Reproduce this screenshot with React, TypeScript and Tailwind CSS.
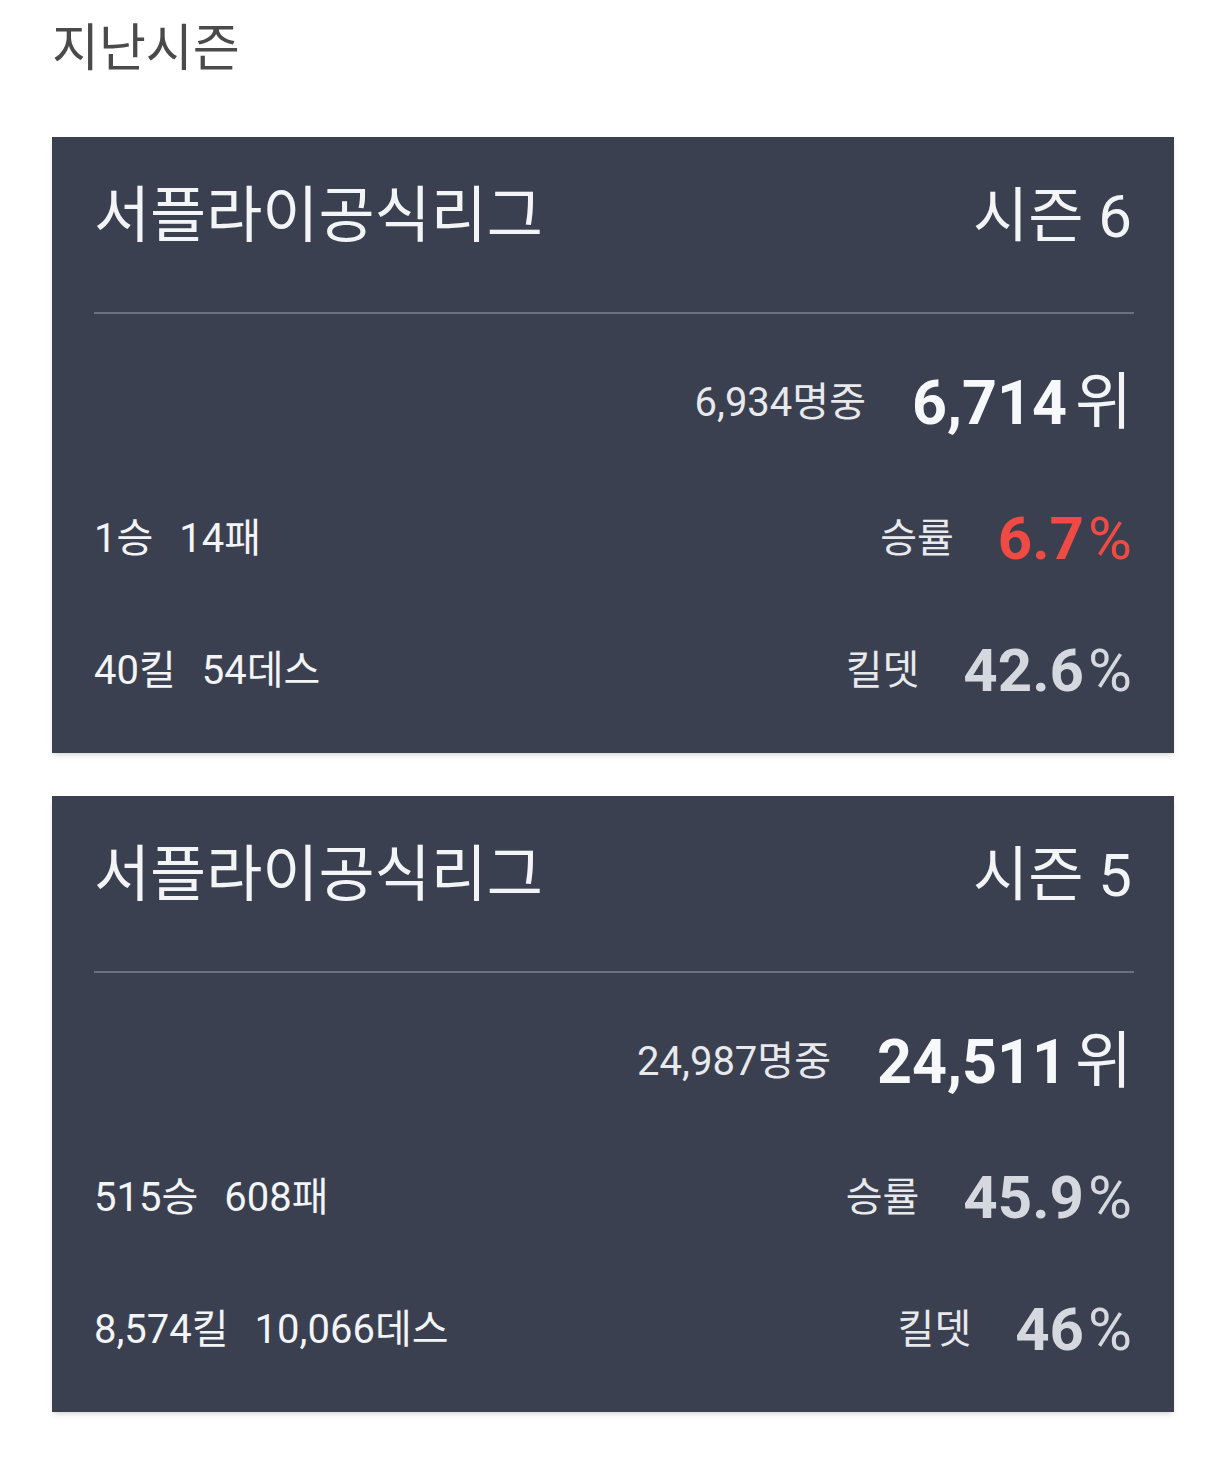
const seasons = [
  {
    league: '서플라이공식리그',
    season: '시즌 6',
    total: '6,934',
    rank: '6,714',
    wins: '1',
    losses: '14',
    winRate: '6.7',
    low: true,
    kills: '40',
    deaths: '54',
    kd: '42.6',
  },
  {
    league: '서플라이공식리그',
    season: '시즌 5',
    total: '24,987',
    rank: '24,511',
    wins: '515',
    losses: '608',
    winRate: '45.9',
    low: false,
    kills: '8,574',
    deaths: '10,066',
    kd: '46',
  },
];

const font = "font-['Roboto','Noto_Sans_CJK_KR',sans-serif]";

const SeasonCard = ({ s }: { s: (typeof seasons)[number] }) => (
  <div className="bg-[#3a4050] shadow-md px-[42px] text-[#f3f4f6]">
    {/* Header */}
    <div className="h-[175px] flex items-center justify-between pb-4">
      <span className="text-[61px] leading-none">{s.league}</span>
      <span className="text-[60px] leading-none">{s.season}</span>
    </div>
    <div className="border-t-2 border-[#6b7180] -mr-[2px]" />

    <div className="pt-[22px] pb-[15px]">
      {/* Rank */}
      <div className="h-[134px] flex items-center justify-end">
        <span className="text-[40px] leading-none text-[#e8e9ec] mr-[46px]">{s.total}명중</span>
        <span className="text-[61px] leading-none font-bold text-[#f7f8fa]">{s.rank}</span>
        <span className="text-[62px] leading-none ml-2">위</span>
      </div>

      {/* Win / Loss */}
      <div className="h-[134px] flex items-center justify-between pt-1">
        <div className="flex gap-[26px] text-[40px] leading-none">
          <span>{s.wins}승</span>
          <span>{s.losses}패</span>
        </div>
        <div className="flex items-center">
          <span className="text-[40px] leading-none text-[#e8e9ec] mr-[44px]">승률</span>
          <span className={`text-[60px] leading-none font-bold ${s.low ? 'text-[#ef4b44]' : 'text-[#d5d8de]'}`}>
            {s.winRate}
          </span>
          <span className={`text-[60px] leading-none ml-1 ${s.low ? 'text-[#ef4b44]' : 'text-[#d5d8de]'}`}>%</span>
        </div>
      </div>

      {/* Kill / Death */}
      <div className="h-[134px] flex items-center justify-between">
        <div className="flex gap-[26px] text-[40px] leading-none">
          <span>{s.kills}킬</span>
          <span>{s.deaths}데스</span>
        </div>
        <div className="flex items-center">
          <span className="text-[40px] leading-none text-[#e8e9ec] mr-[44px]">킬뎃</span>
          <span className="text-[60px] leading-none font-bold text-[#d5d8de]">{s.kd}</span>
          <span className="text-[60px] leading-none ml-1 text-[#d5d8de]">%</span>
        </div>
      </div>
    </div>
  </div>
);

export default function App() {
  return (
    <div className={`${font} bg-white min-h-[1469px] pl-[52px] pr-[42px]`}>
      <div className="h-[96px] flex items-center mb-[41px]">
        <h2 className="text-[51px] leading-none text-[#4a4a4a]">지난시즌</h2>
      </div>
      <div className="flex flex-col gap-[43px]">
        {seasons.map((s) => (
          <SeasonCard key={s.season} s={s} />
        ))}
      </div>
    </div>
  );
}
